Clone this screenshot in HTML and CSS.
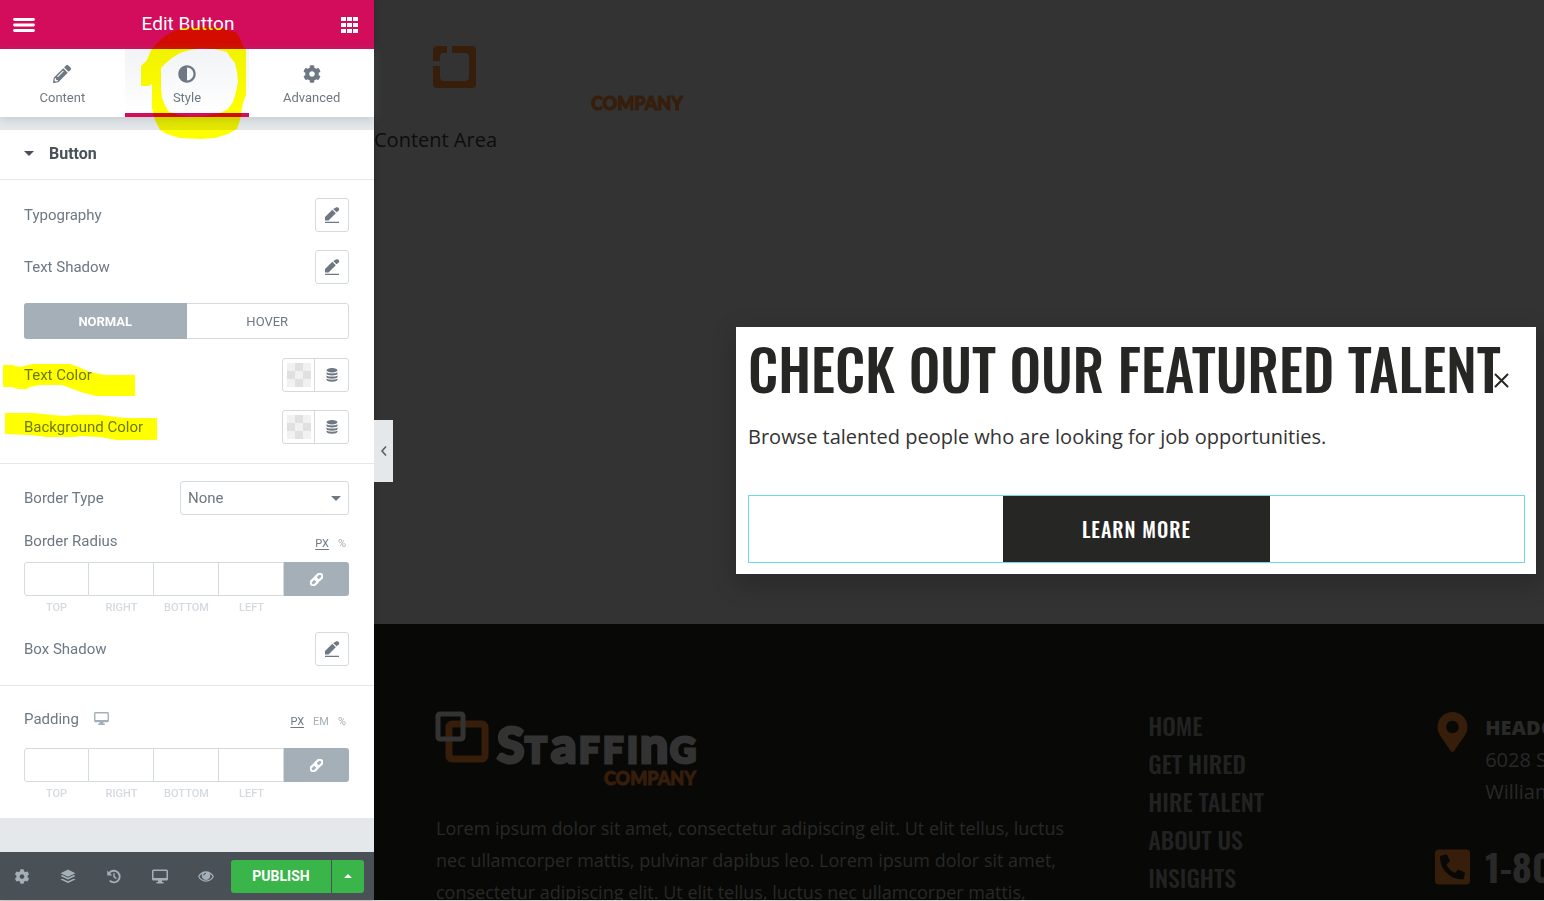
FILE: index.html
```html
<!DOCTYPE html>
<html lang="en">
  <head>
    <meta charset="UTF-8" />
    <title>Edit Button</title>
    <link rel="stylesheet" href="styles.css">
  </head>
  <body>
    <!-- shared icons -->
    <svg class="sprite" aria-hidden="true">
      <symbol id="i-cog" viewBox="0 0 512 512">
        <path d="M487.4 315.7l-42.6-24.6c4.3-23.2 4.3-47 0-70.2l42.6-24.6c4.9-2.8 7.1-8.6 5.5-14-11.1-35.6-30-67.8-54.7-94.6-3.8-4.1-10-5.1-14.8-2.3L380.8 110c-17.9-15.4-38.5-27.3-60.8-35.1V25.8c0-5.6-3.9-10.5-9.4-11.7-36.7-8.2-74.3-7.8-109.2 0-5.5 1.2-9.4 6.1-9.4 11.7V75c-22.2 7.9-42.8 19.8-60.8 35.1L88.7 85.5c-4.9-2.8-11-1.9-14.8 2.3-24.7 26.7-43.6 58.9-54.7 94.6-1.7 5.4.6 11.2 5.5 14L67.3 221c-4.3 23.2-4.3 47 0 70.2l-42.6 24.6c-4.9 2.8-7.1 8.6-5.5 14 11.1 35.6 30 67.8 54.7 94.6 3.8 4.1 10 5.1 14.8 2.3l42.6-24.6c17.9 15.4 38.5 27.3 60.8 35.1v49.2c0 5.6 3.9 10.5 9.4 11.7 36.7 8.2 74.3 7.8 109.2 0 5.5-1.2 9.4-6.1 9.4-11.7v-49.2c22.2-7.9 42.8-19.8 60.8-35.1l42.6 24.6c4.9 2.8 11 1.9 14.8-2.3 24.7-26.7 43.6-58.9 54.7-94.6 1.5-5.5-.7-11.3-5.6-14.1zM256 336c-44.1 0-80-35.9-80-80s35.9-80 80-80 80 35.9 80 80-35.9 80-80 80z" />
      </symbol>
      <symbol id="i-pencil" viewBox="0 0 512 512">
        <path d="M497.9 142.1l-46.1 46.1c-4.7 4.7-12.3 4.7-17 0l-111-111c-4.7-4.7-4.7-12.3 0-17l46.1-46.1c18.7-18.7 49.1-18.7 67.9 0l60.1 60.1c18.8 18.7 18.8 49.1 0 67.9zM284.2 99.8L21.6 362.4.4 483.9c-2.9 16.4 11.4 30.6 27.8 27.8l121.5-21.3 262.6-262.6c4.7-4.7 4.7-12.3 0-17l-111-111c-4.8-4.7-12.4-4.7-17.1 0zM124.1 339.9c-5.5-5.5-5.5-14.3 0-19.8l154-154c5.5-5.5 14.3-5.5 19.8 0s5.5 14.3 0 19.8l-154 154c-5.5 5.5-14.3 5.5-19.8 0zM88 424h48v36.3l-64.5 11.3-31.1-31.1L51.7 376H88v48z" />
      </symbol>
      <symbol id="i-adjust" viewBox="0 0 512 512">
        <path d="M8 256c0 136.966 111.033 248 248 248s248-111.034 248-248S392.966 8 256 8 8 119.033 8 256zm248 184V72c101.705 0 184 82.311 184 184 0 101.705-82.311 184-184 184z" />
      </symbol>
      <symbol id="i-edit" viewBox="0 0 16 16">
        <path d="M1 10V13.500H4.500L11.800 6.200 8.300 2.700zM9.200 2L12.500 5.300l2.300-1.900c.6-.6.6-1.500 0-2.100l-.7-.7c-.6-.6-1.500-.6-2.100 0zM1 14.700h14v1.200H1z" />
      </symbol>
      <symbol id="i-database" viewBox="0 0 12 14">
        <ellipse cx="6" cy="2.200" rx="5.500" ry="2.200" />
        <path d="M.5 4.200c2 1.600 9 1.600 11 0v1.600c0 2.300-11 2.300-11 0zM.5 7.400c2 1.600 9 1.600 11 0V9c0 2.300-11 2.300-11 0zM.5 10.500c2 1.600 9 1.600 11 0v1.300c0 2.600-11 2.600-11 0z" />
      </symbol>
      <symbol id="i-link" viewBox="0 0 16 16">
        <g fill="none" stroke="currentColor" stroke-width="2.700" transform="rotate(-45 8 8)">
          <rect x="-.8" y="4.800" width="9.800" height="6.400" rx="3.200" />
          <rect x="7" y="4.800" width="9.800" height="6.400" rx="3.200" />
        </g>
      </symbol>
      <symbol id="i-desktop" viewBox="0 0 16 14">
        <path fill-rule="evenodd" d="M1.500 0h13Q16 0 16 1.500v8q0 1.500-1.500 1.500H10v1.500h1.500V14h-7v-1.500H6V11H1.500Q0 11 0 9.500v-8Q0 0 1.500 0zM1.500 1.500v7h13v-7z" />
      </symbol>
      <symbol id="i-layers" viewBox="0 0 16 16">
        <path d="M8 .6l8 3.800-8 3.800-8-3.800zM0 7.400l2-.9 6 2.800 6-2.800 2 .9-8 3.800zM0 11.200l2-.9 6 2.800 6-2.800 2 .9L8 15z" />
      </symbol>
      <symbol id="i-history" viewBox="0 0 16 16">
        <path fill="none" stroke="currentColor" stroke-width="2" d="M3 4.200A6.200 6.200 0 1 1 3.400 12.400" />
        <path d="M.8 1.500V7h5.500zM7.200 4.500h1.600v3.300l2.200 1.800-1 1.200-2.800-2.200z" />
      </symbol>
      <symbol id="i-eye" viewBox="0 0 16 12">
        <path fill-rule="evenodd" d="M8 .8c3.500 0 6.300 2 8 5.200-1.700 3.200-4.500 5.200-8 5.200S1.700 9.200 0 6C1.700 2.800 4.500.8 8 .8zM4.100 3.500A8 8 0 0 0 1.400 6c1.500 2.600 3.900 4.100 6.600 4.100S13.100 8.600 14.600 6a8 8 0 0 0-2.700-2.500 4.300 4.300 0 1 1-7.800 0zM7.700 2.200A2.900 2.900 0 0 0 5.200 5h1A1.900 1.900 0 0 1 8 3.200z" />
      </symbol>
    </svg>

    <div class="editor">
      <aside class="panel">
        <header class="panel-header">
          <button class="header-btn" aria-label="Menu">
            <svg width="22" height="14" viewBox="0 0 22 14"><path stroke="#fff" stroke-width="2.800" stroke-linecap="round" d="M1.500 1.500h19M1.500 7h19M1.500 12.500h19" /></svg>
          </button>
          <h1>Edit Button</h1>
          <button class="header-btn" aria-label="Widgets">
            <svg width="17" height="16" viewBox="0 0 17 16"><path fill="#fff" d="M0 0h5v4H0zM6 0h5v4H6zM12 0h5v4h-5zM0 6h5v4H0zM6 6h5v4H6zM12 6h5v4h-5zM0 12h5v4H0zM6 12h5v4H6zM12 12h5v4h-5z" /></svg>
          </button>
        </header>

        <nav class="tabs">
          <button class="tab"><svg class="icon"><use href="#i-pencil" /></svg>Content</button>
          <button class="tab active"><svg class="icon"><use href="#i-adjust" /></svg>Style</button>
          <button class="tab"><svg class="icon"><use href="#i-cog" /></svg>Advanced</button>
        </nav>

        <div class="panel-body">
          <button class="section-title"><span class="caret"></span>Button</button>

          <div class="group">
            <div class="row">
              <span class="label">Typography</span>
              <button class="square-btn" aria-label="Edit typography"><svg class="icon"><use href="#i-edit" /></svg></button>
            </div>
            <div class="row">
              <span class="label">Text Shadow</span>
              <button class="square-btn" aria-label="Edit text shadow"><svg class="icon"><use href="#i-edit" /></svg></button>
            </div>
            <div class="state-switch">
              <button class="state active">NORMAL</button>
              <button class="state">HOVER</button>
            </div>
            <div class="row">
              <span class="label">Text Color</span>
              <div class="color-control">
                <button aria-label="Pick text color"><span class="swatch"></span></button>
                <button aria-label="Dynamic text color"><svg class="icon-db"><use href="#i-database" /></svg></button>
              </div>
            </div>
            <div class="row">
              <span class="label">Background Color</span>
              <div class="color-control">
                <button aria-label="Pick background color"><span class="swatch"></span></button>
                <button aria-label="Dynamic background color"><svg class="icon-db"><use href="#i-database" /></svg></button>
              </div>
            </div>
          </div>

          <div class="group group-border">
            <div class="row">
              <label class="label" for="borderType">Border Type</label>
              <div class="select-wrap">
                <select id="borderType">
                  <option>None</option>
                  <option>Solid</option>
                  <option>Double</option>
                  <option>Dotted</option>
                  <option>Dashed</option>
                </select>
                <span class="caret"></span>
              </div>
            </div>
            <div class="dimensions">
              <div class="dimensions-head">
                <span class="label">Border Radius</span>
                <div class="units"><button class="active">PX</button><button>%</button></div>
              </div>
              <div class="dimensions-grid">
                <input id="rTop" type="text" /><input id="rRight" type="text" /><input id="rBottom" type="text" /><input id="rLeft" type="text" />
                <button class="link-btn" aria-label="Link values"><svg class="icon"><use href="#i-link" /></svg></button>
                <label for="rTop">TOP</label><label for="rRight">RIGHT</label><label for="rBottom">BOTTOM</label><label for="rLeft">LEFT</label>
              </div>
            </div>
            <div class="row">
              <span class="label">Box Shadow</span>
              <button class="square-btn" aria-label="Edit box shadow"><svg class="icon"><use href="#i-edit" /></svg></button>
            </div>
          </div>

          <div class="group group-padding">
            <div class="dimensions">
              <div class="dimensions-head">
                <span class="label">Padding <svg class="icon-desktop"><use href="#i-desktop" /></svg></span>
                <div class="units"><button class="active">PX</button><button>EM</button><button>%</button></div>
              </div>
              <div class="dimensions-grid">
                <input id="pTop" type="text" /><input id="pRight" type="text" /><input id="pBottom" type="text" /><input id="pLeft" type="text" />
                <button class="link-btn" aria-label="Link values"><svg class="icon"><use href="#i-link" /></svg></button>
                <label for="pTop">TOP</label><label for="pRight">RIGHT</label><label for="pBottom">BOTTOM</label><label for="pLeft">LEFT</label>
              </div>
            </div>
          </div>
        </div>

        <footer class="panel-footer">
          <div class="tools">
            <button aria-label="Settings"><svg><use href="#i-cog" /></svg></button>
            <button aria-label="Navigator"><svg><use href="#i-layers" /></svg></button>
            <button aria-label="History"><svg><use href="#i-history" /></svg></button>
            <button aria-label="Responsive mode"><svg><use href="#i-desktop" /></svg></button>
            <button aria-label="Preview"><svg><use href="#i-eye" /></svg></button>
          </div>
          <div class="publish">
            <button class="publish-main">PUBLISH</button>
            <button class="publish-more" aria-label="Save options"><span class="caret up"></span></button>
          </div>
        </footer>

        <button class="panel-toggle" aria-label="Hide panel">
          <svg width="8" height="12" viewBox="0 0 8 12"><path fill="none" stroke="#556068" stroke-width="1.600" d="M6 1.500L2 6l4 4.500" /></svg>
        </button>

        <!-- highlighter marks -->
        <svg class="marks" width="374" height="450" viewBox="0 0 374 450" aria-hidden="true">
          <path fill-rule="evenodd" d="M141 86V66L147 60 151 50 158 42 165 36 174 31 184 28 205 27 222 28 230 31 236 32 240 38 243 46 246 50V95L243 103 240 120 237 129 228 134 215 138 200 139 180 138 167 134 160 130 155 120 152 108V84L149 86ZM161 68L166 63 172 58 180 53 190 50 200 48 215 49 227 52 230 57 235 63 237 72 238 82 236 92 233 102 228 109 220 113 205 116 190 117 178 115 168 111 165 105 162 98 161 88Z" />
          <path d="M3 365H12L20 367 33 364H70L76 366 90 372 105 375H135V396H96L84 393 70 388 62 385H40L30 387 27 389H18L12 387H3Z" />
          <path d="M5 413H34L52 415 66 416 75 415H100L125 418H157V440H117L100 437 80 436 75 437H46L30 435 5 434Z" />
        </svg>
      </aside>

      <main class="preview">
        <header class="site-header">
          <svg class="logo" width="264" height="76" viewBox="0 0 264 76">
            <path class="logo-orange" fill-rule="evenodd" d="M14 9H24V16H20Q17 16 17 20V24H10V13Q10 9 14 9zM29 9H49Q53 9 53 13V47Q53 51 49 51H14Q10 51 10 47V29H17V40Q17 44 21 44H42Q46 44 46 40V20Q46 16 42 16H29z" />
            <text class="logo-company" x="168" y="73">COMPANY</text>
          </svg>
          <p>Content Area</p>
        </header>

        <footer class="site-footer">
          <div class="footer-about">
            <svg class="logo" width="264" height="76" viewBox="0 0 264 76">
              <rect class="logo-orange-line" x="13" y="12" width="36" height="35" rx="3" />
              <rect class="logo-gray-line" x="2" y="2" width="25" height="25" rx="2" />
              <text class="logo-staffing"><tspan class="tall" x="61" y="51">S</tspan><tspan x="89" y="51">T</tspan><tspan class="tall" x="115" y="51">a</tspan><tspan x="143" y="51">F</tspan><tspan x="167" y="51">F</tspan><tspan x="191" y="51">I</tspan><tspan class="tall" x="204" y="51">n</tspan><tspan x="234" y="51">G</tspan></text>
              <text class="logo-company" x="168" y="73">COMPANY</text>
            </svg>
            <p>Lorem ipsum dolor sit amet, consectetur adipiscing elit. Ut elit tellus, luctus nec ullamcorper mattis, pulvinar dapibus leo. Lorem ipsum dolor sit amet, consectetur adipiscing elit. Ut elit tellus, luctus nec ullamcorper mattis,</p>
          </div>
          <ul class="footer-links">
            <li><a href="#">HOME</a></li>
            <li><a href="#">GET HIRED</a></li>
            <li><a href="#">HIRE TALENT</a></li>
            <li><a href="#">ABOUT US</a></li>
            <li><a href="#">INSIGHTS</a></li>
          </ul>
          <div class="footer-contact">
            <div class="contact-item">
              <svg width="35" height="40" viewBox="0 0 384 512"><path d="M172.268 501.670C26.970 291.031 0 269.413 0 192 0 85.961 85.961 0 192 0s192 85.961 192 192c0 77.413-26.970 99.031-172.268 309.670-9.535 13.774-29.930 13.773-39.464 0zM192 272c44.183 0 80-35.817 80-80s-35.817-80-80-80-80 35.817-80 80 35.817 80 80 80z" /></svg>
              <address><strong>HEADQUARTERS</strong><br />6028 S<br />William</address>
            </div>
            <div class="contact-item">
              <svg width="35" height="36" viewBox="0 32 448 448"><path d="M400 32H48A48 48 0 0 0 0 80v352a48 48 0 0 0 48 48h352a48 48 0 0 0 48-48V80a48 48 0 0 0-48-48zm-16.390 307.370l-15 65A15 15 0 0 1 354 416C194 416 64 286.290 64 126a15.700 15.700 0 0 1 11.630-14.610l65-15A18.230 18.230 0 0 1 144 96a16.270 16.270 0 0 1 13.790 9.090l30 70A17.900 17.900 0 0 1 189 181a17 17 0 0 1-5.500 11.610l-37.890 31a231.910 231.910 0 0 0 110.780 110.780l31-37.890A17 17 0 0 1 299 291a17.850 17.850 0 0 1 5.910 1.210l70 30A16.250 16.250 0 0 1 384 336a17.410 17.410 0 0 1-.39 3.370z" /></svg>
              <a class="phone" href="#">1-800</a>
            </div>
          </div>
        </footer>

        <div class="modal">
          <h2>CHECK OUT OUR FEATURED TALENT</h2>
          <p>Browse talented people who are looking for job opportunities.</p>
          <div class="widget">
            <a class="cta" href="#">LEARN MORE</a>
          </div>
          <button class="modal-close" aria-label="Close">
            <svg width="15" height="15" viewBox="0 0 15 15"><path stroke="#262625" stroke-width="2" stroke-linecap="round" d="M1.500 1.500l12 12M13.500 1.500l-12 12" /></svg>
          </button>
        </div>
      </main>
    </div>
  </body>
</html>
```
FILE: styles.css
```css
* {
  box-sizing: border-box;
}

body {
  margin: 0;
  font-family: Roboto, "Liberation Sans", sans-serif;
  color: #6d7882;
}

button {
  font: inherit;
  color: inherit;
  background: none;
  border: none;
  padding: 0;
  cursor: pointer;
}

svg {
  fill: currentColor;
  display: block;
}

.sprite {
  position: absolute;
  width: 0;
  height: 0;
}

.editor {
  display: flex;
  height: 100vh;
  border-bottom: 1px solid #dcd3d2;
}

/* panel */
.panel {
  position: relative;
  z-index: 1;
  flex: 0 0 374px;
  display: flex;
  flex-direction: column;
  background: #e4e8eb;
  box-shadow: 0 0 6px rgba(0, 0, 0, 0.2);
}

.panel-header {
  display: flex;
  align-items: center;
  justify-content: space-between;
  height: 49px;
  padding: 0 16px 0 13px;
  background: #d30c5c;
  color: #fff;
}

.panel-header h1 {
  margin: 0;
  padding-bottom: 2px;
  font-size: 19px;
  font-weight: 400;
}

.tabs {
  display: grid;
  grid-template-columns: repeat(3, 1fr);
  height: 68px;
  background: #fff;
  box-shadow: 0 2px 10px rgba(109, 120, 130, 0.3);
}

.tab {
  display: flex;
  flex-direction: column;
  align-items: center;
  gap: 7px;
  padding-top: 16px;
  border-bottom: 4px solid transparent;
  font-size: 13px;
  line-height: 15px;
}

.tab.active {
  border-color: #d30c5c;
  background: linear-gradient(#f1f3f5, #fff);
}

.tab .icon {
  width: 18px;
  height: 18px;
}

.panel-body {
  flex: 1;
  margin-top: 13px;
}

.section-title {
  display: flex;
  align-items: center;
  gap: 15px;
  width: 100%;
  height: 50px;
  padding: 0 24px 2px;
  background: #fff;
  border-bottom: 1px solid #e4e8eb;
  color: #495157;
  font-size: 16px;
  font-weight: 700;
}

.caret {
  border: 5px solid transparent;
  border-top-color: currentColor;
  border-bottom: 0;
}

.group {
  display: flex;
  flex-direction: column;
  gap: 18px;
  padding: 18px 25px 19px 24px;
  background: #fff;
}

.group + .group {
  border-top: 1px solid #e4e8eb;
}

.group-border {
  gap: 17px;
  padding-top: 17px;
}

.group-padding {
  padding-bottom: 17px;
}

.row {
  display: flex;
  align-items: center;
  justify-content: space-between;
  height: 34px;
}

.label {
  display: flex;
  gap: 15px;
  font-size: 15px;
  line-height: 18px;
}

.square-btn {
  display: grid;
  place-items: center;
  width: 34px;
  height: 34px;
  border: 1px solid #d5dadf;
  border-radius: 3px;
}

.icon {
  width: 16px;
  height: 16px;
}

.state-switch {
  display: grid;
  grid-template-columns: 1fr 1fr;
  height: 36px;
  margin: 1px 0;
  border: 1px solid #d5dadf;
  border-radius: 3px;
  font-size: 13px;
}

.state.active {
  margin: -1px 0 -1px -1px;
  background: #a4afb7;
  border-radius: 3px 0 0 3px;
  color: #fff;
  font-weight: 700;
}

.color-control {
  display: flex;
  height: 34px;
  border: 1px solid #d5dadf;
  border-radius: 3px;
}

.color-control button {
  display: grid;
  place-items: center;
  width: 33px;
}

.color-control button:first-child {
  width: 32px;
  border-right: 1px solid #d5dadf;
}

.swatch {
  width: 24px;
  height: 24px;
  background: repeating-conic-gradient(#e0e0e0 0 25%, #f1f1f1 0 50%) 0 0 / 16px 16px;
}

.icon-db {
  width: 12px;
  height: 14px;
}

.select-wrap {
  position: relative;
  width: 52%;
}

.select-wrap select {
  appearance: none;
  width: 100%;
  height: 34px;
  padding: 0 7px;
  border: 1px solid #d5dadf;
  border-radius: 3px;
  background: #fff;
  color: inherit;
  font: inherit;
  font-size: 15px;
}

.select-wrap .caret {
  position: absolute;
  top: 15px;
  right: 8px;
  pointer-events: none;
}

.dimensions-head {
  display: flex;
  align-items: center;
  justify-content: space-between;
  height: 18px;
  margin-bottom: 12px;
}

.group-padding .dimensions-head {
  margin: 6px 0 20px;
}

.units {
  display: flex;
  gap: 9px;
  padding: 4px 3px 0 0;
  color: #a4afb7;
  font-size: 11px;
}

.units .active {
  color: #6d7882;
  text-decoration: underline;
  text-underline-offset: 2px;
}

.icon-desktop {
  width: 15px;
  height: 13px;
  margin-top: 2px;
  color: #a4afb7;
}

.dimensions-grid {
  display: grid;
  grid-template-columns: repeat(5, 1fr);
  row-gap: 5px;
}

.dimensions-grid input {
  width: 100%;
  height: 34px;
  border: 1px solid #d5dadf;
  border-left-width: 0;
}

.dimensions-grid input:first-child {
  border-left-width: 1px;
  border-radius: 3px 0 0 3px;
}

.link-btn {
  display: grid;
  place-items: center;
  background: #a4afb7;
  border-radius: 0 3px 3px 0;
  color: #fff;
}

.link-btn .icon {
  width: 13px;
  height: 13px;
  overflow: visible;
}

.dimensions-grid label {
  color: #d5dadf;
  font-size: 11px;
  font-weight: 500;
  line-height: 14px;
  text-align: center;
}

.panel-footer {
  display: flex;
  align-items: center;
  justify-content: space-between;
  height: 48px;
  padding: 0 10px 0 14px;
  background: #495157;
}

.tools {
  display: flex;
  gap: 30px;
  color: #a4afb7;
}

.tools svg {
  width: 16px;
  height: 15px;
}

.publish {
  display: flex;
  gap: 1px;
  height: 33px;
  color: #fff;
}

.publish button {
  background: #39b54a;
}

.publish-main {
  width: 100px;
  border-radius: 3px 0 0 3px;
  font-size: 14px;
  font-weight: 700;
}

.publish-more {
  display: grid;
  place-items: center;
  width: 32px;
  border-radius: 0 3px 3px 0;
}

.caret.up {
  border-width: 0 4px 4px;
  border-bottom: 4px solid currentColor;
}

.panel-toggle {
  position: absolute;
  top: 420px;
  left: 100%;
  display: grid;
  place-items: center;
  width: 19px;
  height: 62px;
  background: #e4e8eb;
}

.marks {
  position: absolute;
  top: 0;
  left: 0;
  fill: #ff0;
  mix-blend-mode: multiply;
  pointer-events: none;
}

/* site preview */
.preview {
  position: relative;
  flex: 1;
  min-width: 0;
  display: flex;
  flex-direction: column;
  overflow: hidden;
  background: #333;
  font-family: "Open Sans", sans-serif;
}

.site-header {
  flex: 0 0 624px;
  padding-top: 37px;
}

.site-header .logo {
  margin-left: 49px;
}

.site-header p {
  margin: 11px 0 0;
  color: #0d0d0d;
  font-size: 20px;
  line-height: 32px;
}

.logo {
  overflow: visible;
}

.logo-orange {
  fill: #361e0b;
}

.logo-orange-line {
  fill: none;
  stroke: #361e0b;
  stroke-width: 7px;
}

.logo-gray-line {
  fill: none;
  stroke: #333;
  stroke-width: 5px;
}

.logo-company {
  fill: #361e0b;
  stroke: #361e0b;
  stroke-width: 1px;
  font: 900 18px Lato, sans-serif;
}

.logo-staffing {
  fill: #333;
  stroke: #333;
  stroke-width: 3px;
  font: 900 36px Lato, sans-serif;
}

.logo-staffing .tall {
  font-size: 50px;
}

.site-footer {
  flex: 1;
  min-height: 0;
  display: grid;
  grid-template-columns: minmax(0, 72fr) minmax(0, 29fr) minmax(0, 11fr);
  padding: 88px 0 0 62px;
  background: #080806;
  color: #292929;
  font-size: 18px;
  line-height: 32px;
}

.footer-about p {
  max-width: 640px;
  margin: 24px 0 0;
}

.footer-links {
  margin: -6px 0 0;
  padding: 0;
  list-style: none;
  color: #222;
  font: 500 24px/38px Oswald, "Liberation Sans Narrow", sans-serif;
}

.footer-links a,
.phone {
  color: inherit;
  text-decoration: none;
}

.footer-contact {
  display: flex;
  flex-direction: column;
  gap: 41px;
  white-space: nowrap;
}

.contact-item {
  display: flex;
  gap: 15px;
}

.contact-item svg {
  flex: none;
  color: #361e0b;
}

address {
  font-size: 20px;
  font-style: normal;
}

address strong {
  font-weight: 800;
}

.phone {
  font: 700 38px/34px Oswald, "Liberation Sans Narrow", sans-serif;
}

/* popup over the page */
.modal {
  position: absolute;
  top: 327px;
  right: 8px;
  width: 800px;
  padding: 12px 11px 11px 12px;
  background: #fff;
  box-shadow: 2px 8px 23px 3px rgba(0, 0, 0, 0.2);
  color: #262625;
}

.modal h2 {
  margin: 0;
  font: 500 56px/58px Oswald, "Liberation Sans Narrow", sans-serif;
  white-space: nowrap;
}

.modal p {
  margin: 24px 0 42px;
  color: #333;
  font-size: 20px;
  line-height: 32px;
}

.widget {
  display: flex;
  justify-content: center;
  border: 1px solid #6ed5f5;
}

.cta {
  padding: 0 79px;
  background: #262625;
  color: #fff;
  font: 500 20px/66px Oswald, "Liberation Sans Narrow", sans-serif;
  letter-spacing: 1px;
  text-decoration: none;
}

.modal-close {
  position: absolute;
  top: 46px;
  right: 27px;
}
```
